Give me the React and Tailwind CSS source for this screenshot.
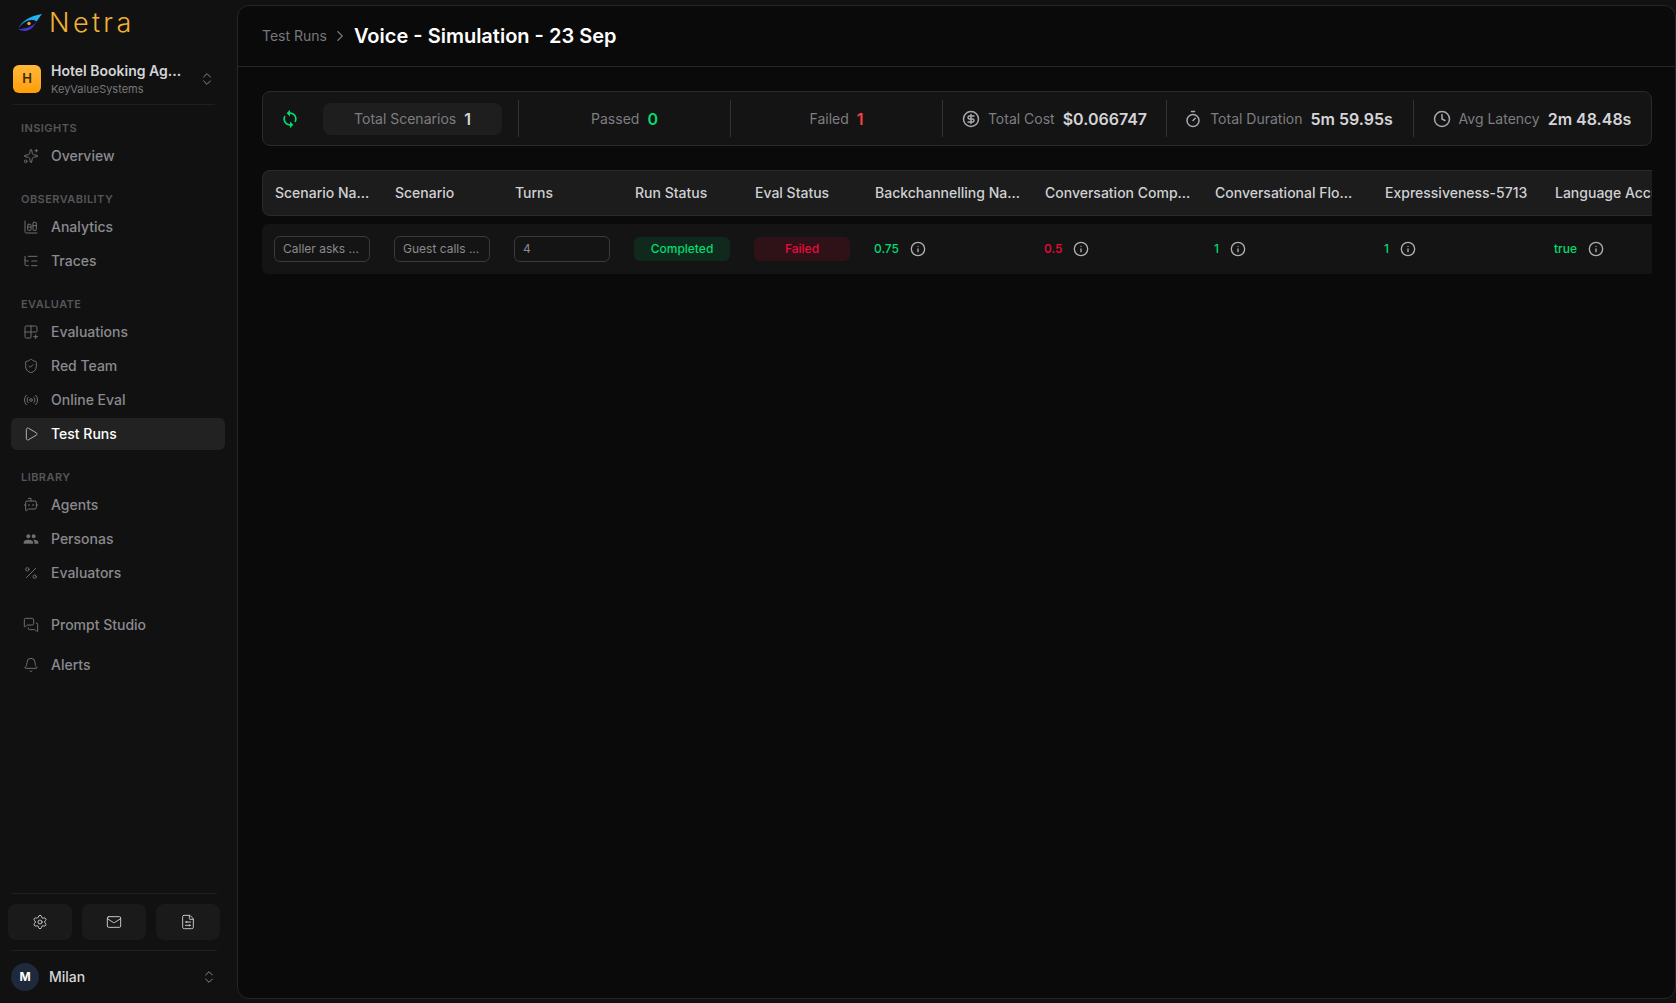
import React from "react";
import {
  Sparkles,
  ListTree,
  Grid2x2Plus,
  ShieldCheck,
  Radio,
  Play,
  BotMessageSquare,
  Percent,
  MessagesSquare,
  Bell,
  Settings,
  Mail,
  FileSliders,
  ChevronsUpDown,
  ChevronRight,
  CircleDollarSign,
  Timer,
  Clock,
  Info,
} from "lucide-react";
import { MdPeople, MdSync } from "react-icons/md";

const font = { fontFamily: "Inter, 'Noto Sans', sans-serif" };

// two bars with a tick inside, on an L shaped axis
const AnalyticsIcon = ({ className }) => (
  <svg className={className} viewBox="0 0 24 24" fill="none" stroke="currentColor" strokeWidth="1.5" strokeLinecap="round" strokeLinejoin="round">
    <path d="M3 3v16a2 2 0 0 0 2 2h16" />
    <rect x="7" y="8" width="5" height="9" rx="1" />
    <rect x="15" y="5" width="5" height="12" rx="1" />
    <path d="M7 12h5M15 10h5" />
  </svg>
);

const PeopleIcon = ({ className }) => <MdPeople className={className} />;

const EyeLogo = () => (
  <svg className="w-6 h-5" viewBox="0 0 24 20">
    <defs>
      <linearGradient id="wing" x1="0" y1="1" x2="1" y2="0">
        <stop offset="0" stopColor="#1d4ed8" />
        <stop offset="0.45" stopColor="#0ea5e9" />
        <stop offset="1" stopColor="#38bdf8" />
      </linearGradient>
    </defs>
    <path d="M0 16C3.5 8 12 3 24 1C21.5 3.5 20.5 6 18.5 8.5C13 5 6 8 0 16Z" fill="url(#wing)" />
    <path d="M0 16C6 19.5 14 19 18.5 8.5C15.5 13.5 7 16 0 16Z" fill="#4338ca" />
    <circle cx="11" cy="10.5" r="1.7" fill="#f0a92b" />
  </svg>
);

const NavItem = ({ icon: Icon, label, active }) => (
  <div
    className={`flex items-center gap-3 h-8 pl-3 rounded-md text-sm font-medium ${
      active ? "bg-[#222222] text-white" : "text-[#8a8a8f]"
    }`}
  >
    <Icon className={`w-4 h-4 ${active ? "text-[#b0b0b0]" : "text-[#6f6f73]"}`} strokeWidth={1.5} />
    {label}
  </div>
);

const Section = ({ title, children, className = "" }) => (
  <div className={className}>
    <div className="h-4 mb-1 pl-2.5 flex items-center text-[11px] leading-none font-semibold tracking-[0.04em] text-[#55555a]">
      {title}
    </div>
    <div className="flex flex-col gap-0.5">{children}</div>
  </div>
);

const Sidebar = () => (
  <aside className="w-[237px] shrink-0 flex flex-col h-full">
    <div className="h-[65px] pl-[18px] pt-[12px] flex items-start gap-[7px]">
      <div className="pt-px">
        <EyeLogo />
      </div>
      <span className="text-[27px] leading-[20px] pt-[1px] font-light tracking-[0.125em] text-[#f2b134]">Netra</span>
    </div>

    <div className="ml-[13px] mr-[22px] h-[40px] border-b border-[#1f1f1f] flex items-start">
      <div className="w-7 h-7 rounded-md bg-gradient-to-b from-[#ffb938] to-[#ff9d00] flex items-center justify-center text-[13px] font-semibold text-[#3a2a08]">
        H
      </div>
      <div className="ml-[10px] -mt-[3px] w-[140px]">
        <div className="text-sm leading-[18px] font-semibold text-[#d4d4d8] whitespace-nowrap">Hotel Booking Ag...</div>
        <div className="mt-px text-[11px] leading-[16px] text-[#77777c]">KeyValueSystems</div>
      </div>
      <ChevronsUpDown className="w-4 h-4 ml-[8px] mt-[6px] text-[#8a8a8f]" strokeWidth={1.5} />
    </div>

    <nav className="pl-[11px] pr-3 pt-[15px]">
      <Section title="INSIGHTS">
        <NavItem icon={Sparkles} label="Overview" />
      </Section>
      <Section title="OBSERVABILITY" className="mt-[19px]">
        <NavItem icon={AnalyticsIcon} label="Analytics" />
        <NavItem icon={ListTree} label="Traces" />
      </Section>
      <Section title="EVALUATE" className="mt-[19px]">
        <NavItem icon={Grid2x2Plus} label="Evaluations" />
        <NavItem icon={ShieldCheck} label="Red Team" />
        <NavItem icon={Radio} label="Online Eval" />
        <NavItem icon={Play} label="Test Runs" active />
      </Section>
      <Section title="LIBRARY" className="mt-[19px]">
        <NavItem icon={BotMessageSquare} label="Agents" />
        <NavItem icon={PeopleIcon} label="Personas" />
        <NavItem icon={Percent} label="Evaluators" />
      </Section>
      <div className="mt-5 flex flex-col gap-2">
        <NavItem icon={MessagesSquare} label="Prompt Studio" />
        <NavItem icon={Bell} label="Alerts" />
      </div>
    </nav>

    <div className="mt-auto">
      <div className="ml-[11px] mr-5 border-t border-[#1f1f1f] pt-[10px]" />
      <div className="flex gap-[10px] pl-2">
        {[Settings, Mail, FileSliders].map((Icon, i) => (
          <div key={i} className="w-16 h-9 rounded-lg bg-[#1a1a1a] flex items-center justify-center">
            <Icon className="w-4 h-4 text-[#c4c4c4]" strokeWidth={1.5} />
          </div>
        ))}
      </div>
      <div className="ml-[11px] mr-5 mt-[10px] border-t border-[#1f1f1f] pt-3 pb-[12px] flex items-center">
        <div className="w-7 h-7 rounded-full bg-[#1e293b] flex items-center justify-center text-xs font-bold text-white">M</div>
        <span className="ml-[10px] text-sm font-medium text-[#d4d4d8]">Milan</span>
        <ChevronsUpDown className="w-4 h-4 ml-auto text-[#8a8a8f]" strokeWidth={1.5} />
      </div>
    </div>
  </aside>
);

const Divider = () => <div className="w-px h-[37px] bg-[#333333] shrink-0" />;

const Stat = ({ label, value, valueClass = "text-[#d4d4d8]", icon: Icon, className = "" }) => (
  <div className={`flex items-center justify-center ${className}`}>
    {Icon && <Icon className="w-[18px] h-[18px] mr-2 text-[#a8a8ae]" strokeWidth={2} />}
    <span className="text-sm text-[#7d7d82]">{label}</span>
    <span className={`ml-2 text-base font-semibold ${valueClass}`}>{value}</span>
  </div>
);

const StatsBar = () => (
  <div className="h-[55px] flex items-center rounded-lg border border-[#2a2a2a] bg-[#141414]">
    <div className="w-[60px] flex justify-center pr-[7px] shrink-0">
      <MdSync className="w-5 h-5 text-[#00dc6e]" />
    </div>
    <div className="w-[179px] h-8 shrink-0 rounded-lg bg-[#1e1e1e] flex items-center justify-center">
      <Stat label="Total Scenarios" value="1" />
    </div>
    <div className="w-4 shrink-0" />
    <Divider />
    <Stat label="Passed" value="0" valueClass="text-[#00dc6e]" className="w-[211px]" />
    <Divider />
    <Stat label="Failed" value="1" valueClass="text-[#ef4444]" className="w-[211px]" />
    <Divider />
    <Stat label="Total Cost" value="$0.066747" icon={CircleDollarSign} className="w-[223px]" />
    <Divider />
    <Stat label="Total Duration" value="5m 59.95s" icon={Timer} className="w-[246px] pr-[3px]" />
    <Divider />
    <Stat label="Avg Latency" value="2m 48.48s" icon={Clock} className="flex-1 pr-px" />
  </div>
);

const columns = [
  { title: "Scenario Na...", w: "w-[120px]" },
  { title: "Scenario", w: "w-[120px]" },
  { title: "Turns", w: "w-[120px]" },
  { title: "Run Status", w: "w-[120px]" },
  { title: "Eval Status", w: "w-[120px]" },
  { title: "Backchannelling Na...", w: "w-[170px]" },
  { title: "Conversation Comp...", w: "w-[170px]" },
  { title: "Conversational Flo...", w: "w-[170px]" },
  { title: "Expressiveness-5713", w: "w-[170px]" },
  { title: "Language Accuracy", w: "w-[170px]" },
];

const TextCell = ({ children }) => (
  <div className="w-24 h-[26px] px-2 flex items-center rounded-md border border-[#3a3a3a] text-xs text-[#8a8a8f] whitespace-nowrap">
    {children}
  </div>
);

const Score = ({ value, color }) => (
  <div className="flex items-center gap-[11px] text-xs font-medium">
    <span className={color}>{value}</span>
    <Info className="w-4 h-4 text-[#b0b0b4]" strokeWidth={2} />
  </div>
);

const Table = () => (
  <div className="mt-6 overflow-hidden">
    <div className="flex h-[46px] items-center rounded-l-lg border border-r-0 border-[#2a2a2a] bg-[#1c1c1c] w-[1600px]">
      {columns.map((c) => (
        <div key={c.title} className={`${c.w} shrink-0 pl-3 text-sm font-medium text-[#cfd0d4] whitespace-nowrap`}>
          {c.title}
        </div>
      ))}
    </div>
    <div className="mt-2 flex h-[50px] items-center rounded-l-md bg-[#141414] w-[1600px]">
      <div className="w-[120px] shrink-0 pl-3"><TextCell>Caller asks ...</TextCell></div>
      <div className="w-[120px] shrink-0 pl-3"><TextCell>Guest calls ...</TextCell></div>
      <div className="w-[120px] shrink-0 pl-3"><TextCell>4</TextCell></div>
      <div className="w-[120px] shrink-0 pl-3">
        <div className="w-24 h-6 rounded-md bg-[#10291d] flex items-center justify-center text-xs font-medium text-[#00dc6e]">Completed</div>
      </div>
      <div className="w-[120px] shrink-0 pl-3">
        <div className="w-24 h-6 rounded-md bg-[#2e1218] flex items-center justify-center text-xs font-medium text-[#f0093c]">Failed</div>
      </div>
      <div className="w-[170px] shrink-0 pl-3"><Score value="0.75" color="text-[#00dc6e]" /></div>
      <div className="w-[170px] shrink-0 pl-3"><Score value="0.5" color="text-[#f0093c]" /></div>
      <div className="w-[170px] shrink-0 pl-3"><Score value="1" color="text-[#00dc6e]" /></div>
      <div className="w-[170px] shrink-0 pl-3"><Score value="1" color="text-[#00dc6e]" /></div>
      <div className="w-[170px] shrink-0 pl-3"><Score value="true" color="text-[#00dc6e]" /></div>
    </div>
  </div>
);

export default function App() {
  return (
    <div className="flex h-screen overflow-hidden bg-[#111111]" style={font}>
      <Sidebar />
      <main className="flex-1 min-w-0 mt-[5px] mb-[4px] rounded-xl border border-[#262626] bg-[#0a0a0a]">
        <div className="h-[61px] px-6 flex items-center border-b border-[#262626]">
          <span className="text-sm text-[#77777c]">Test Runs</span>
          <ChevronRight className="w-[18px] h-[18px] mx-1 text-[#77777c]" strokeWidth={1.5} />
          <h1 className="ml-px text-xl font-semibold text-white">Voice - Simulation - 23 Sep</h1>
        </div>
        <div className="pl-6 pr-[23px] pt-6">
          <StatsBar />
          <Table />
        </div>
      </main>
    </div>
  );
}
